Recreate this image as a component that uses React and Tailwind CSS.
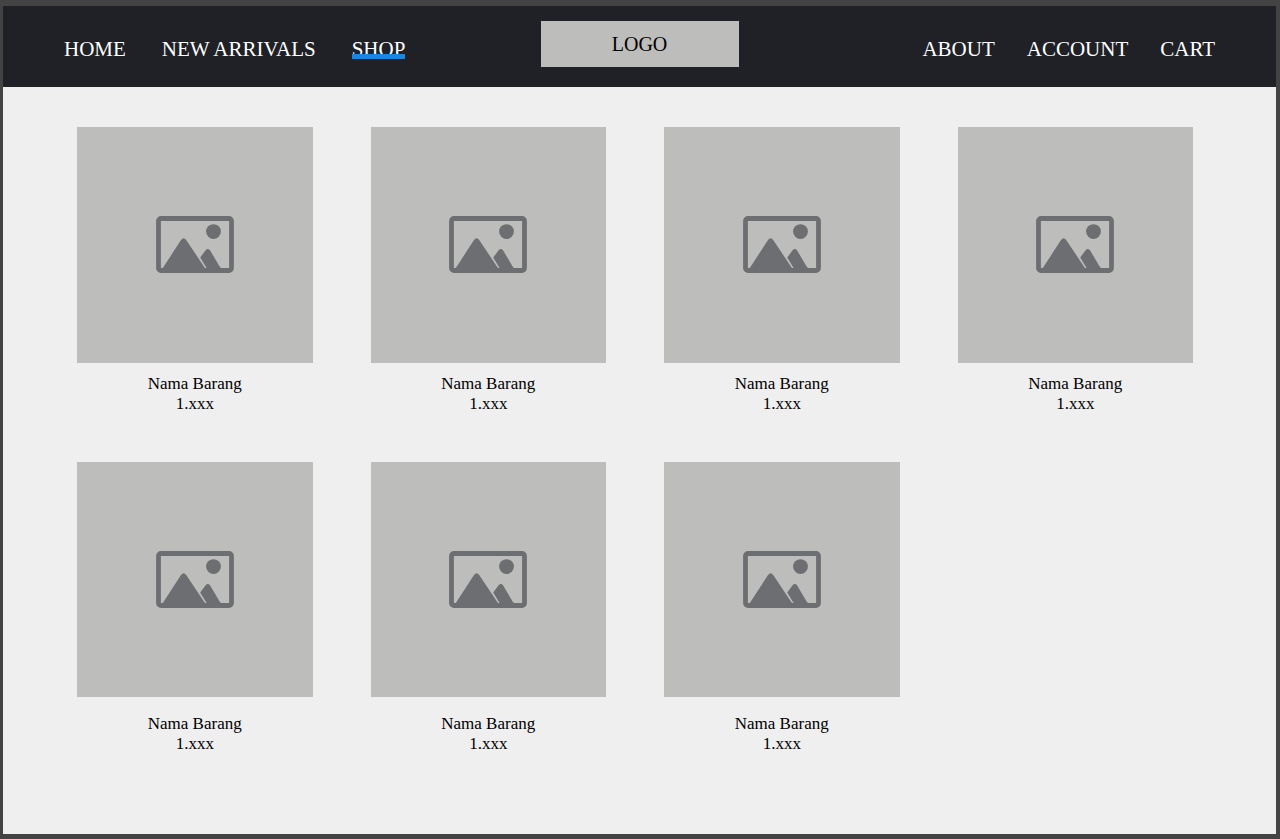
const leftLinks = [
  { label: "HOME" },
  { label: "NEW ARRIVALS" },
  { label: "SHOP", active: true },
];
const rightLinks = [{ label: "ABOUT" }, { label: "ACCOUNT" }, { label: "CART" }];

const firstRow = [1, 2, 3, 4];
const secondRow = [5, 6, 7];

function NavLinks({ links, label, className }) {
  return (
    <nav aria-label={label} className={className}>
      {links.map((link) => (
        <a
          key={link.label}
          href="#"
          aria-current={link.active ? "page" : undefined}
          className="relative whitespace-nowrap text-[21px] leading-7 text-white"
        >
          {link.label}
          {link.active && (
            <span className="absolute inset-x-0 bottom-1 h-[5px] bg-[#1787e0]" />
          )}
        </a>
      ))}
    </nav>
  );
}

function PictureIcon() {
  return (
    <svg
      viewBox="0 0 78 57"
      className="w-[78px] text-[#6d6e72]"
      fill="currentColor"
      aria-hidden="true"
    >
      <rect
        x="2.5"
        y="2.5"
        width="73"
        height="52"
        rx="2.5"
        fill="none"
        stroke="currentColor"
        strokeWidth="4.8"
      />
      <circle cx="57.5" cy="15.6" r="7.4" />
      <path d="M6.5 52.5 L25 24 Q27.6 20.6 30.2 24 L49.6 53 H6.5 Z" />
      <path d="M44.2 41.6 L49.6 34.2 Q51.8 31.6 54 34.2 L63.6 50.5 Q64.6 52 66 52.5 L51.2 53 Z" />
    </svg>
  );
}

function ProductRow({ items, captionClass }) {
  return (
    <ul className="grid grid-cols-4 gap-x-[58px]">
      {items.map((id) => (
        <li key={id}>
          <a href="#" className="block text-center text-[17px] leading-5 text-black">
            <div className="flex aspect-square items-center justify-center bg-[#bdbdbb]">
              <PictureIcon />
            </div>
            <div className={captionClass}>
              <p>Nama Barang</p>
              <p>1.xxx</p>
            </div>
          </a>
        </li>
      ))}
    </ul>
  );
}

export default function App() {
  return (
    <div className="flex min-h-screen flex-col bg-[#434343] pt-1.5 pr-1 pb-[5px] pl-[3px] font-['Liberation_Serif',serif]">
      <header className="grid grid-cols-[1fr_198px_1fr] items-start bg-[#202126] px-[61px] pt-[15px] pb-5">
        <NavLinks links={leftLinks} label="Shop" className="flex gap-9 pt-3.5" />
        <a
          href="#"
          className="flex h-[46px] items-center justify-center bg-[#bdbdbb] text-xl text-black"
        >
          LOGO
        </a>
        <NavLinks
          links={rightLinks}
          label="Account"
          className="flex justify-end gap-8 pt-3.5"
        />
      </header>
      <main className="flex grow flex-col gap-12 bg-[#efefef] pt-10 pr-[83px] pb-10 pl-[74px]">
        <ProductRow items={firstRow} captionClass="pt-[11px]" />
        <ProductRow items={secondRow} captionClass="pt-[17px]" />
      </main>
    </div>
  );
}
